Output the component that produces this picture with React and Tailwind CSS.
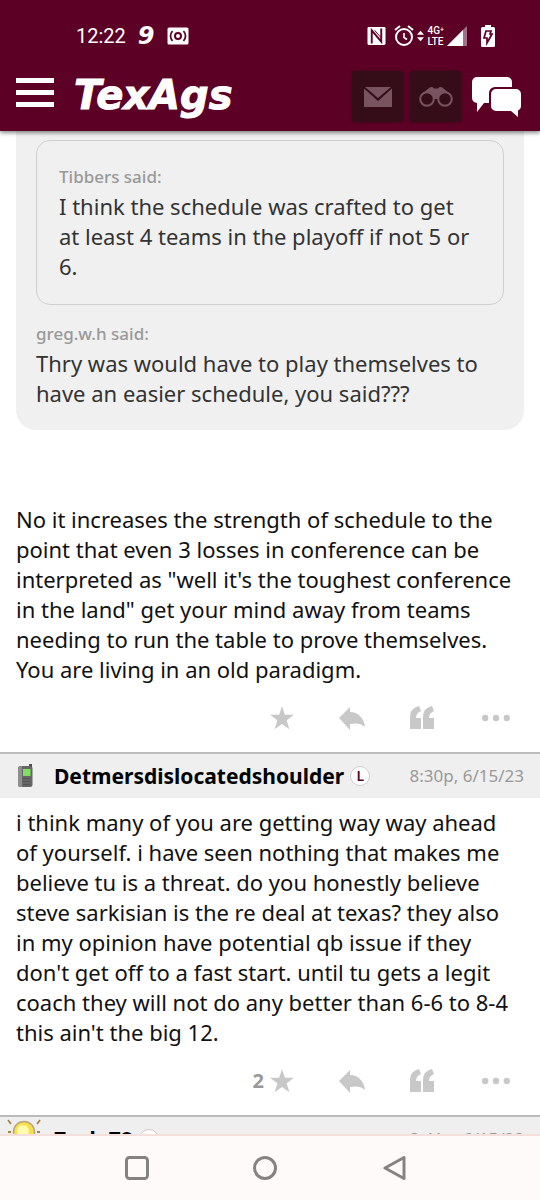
import React from 'react';

const StatusBar = () => (
  <div className="flex h-[58px] items-end justify-between pr-[45px] pl-[76px] pb-2 font-[Roboto,sans-serif] text-white">
    <div className="flex items-center gap-3">
      <span className="text-[20px] leading-7">12:22</span>
      <span className="font-['DejaVu_Sans',sans-serif] text-[24px] leading-7 font-bold italic">9</span>
      <svg className="h-[18px] w-[22px]" viewBox="0 0 22 18" fill="none">
        <rect x="0.5" y="0.5" width="21" height="17" rx="1.5" fill="#fff" />
        <circle cx="11" cy="9" r="3" stroke="#5c0025" strokeWidth="2" />
        <path d="M5.5 4Q1.500 9 5.500 14M16.500 4Q20.500 9 16.500 14" stroke="#5c0025" strokeWidth="1.700" />
      </svg>
    </div>
    <div className="flex h-7 items-center">
      <svg className="h-5 w-[19px]" viewBox="0 0 20 20" fill="none">
        <rect x="0.5" y="0.5" width="19" height="19" rx="1.5" fill="#fff" />
        <path d="M5 18V4l10 12V2" stroke="#5c0025" strokeWidth="2" />
        <path d="M8 4l7 8" stroke="#5c0025" strokeWidth="1" />
      </svg>
      <svg className="ml-2 h-[22px] w-5" viewBox="0 0 20 22" fill="none" stroke="#fff">
        <circle cx="10" cy="12" r="8" strokeWidth="2" />
        <path d="M1 5l5-4M19 5l-5-4" strokeWidth="2" />
        <path d="M10 8v4.500l3 2" strokeWidth="1.600" />
      </svg>
      <svg className="ml-[3px] h-3 w-[7px]" viewBox="0 0 8 12" fill="#fff">
        <path d="M4 0l4 4.500H0zM4 12l4-4.500H0z" />
      </svg>
      <span className="ml-[3px] text-[10px] leading-[11px] font-medium">4G⁺<br />LTE</span>
      <svg className="ml-[3px] h-5 w-5" viewBox="0 0 20 20">
        <path d="M20 0v20H0z" fill="#a3708a" />
        <path d="M16 4v16H0z" fill="#fff" />
      </svg>
      <svg className="ml-3.5 h-[22px] w-3.5" viewBox="0 0 14 22">
        <path d="M4 0h6v2h2.500A1.500 1.500 0 0 1 14 3.500v17a1.500 1.500 0 0 1-1.500 1.500h-11A1.500 1.500 0 0 1 0 20.500v-17A1.500 1.500 0 0 1 1.500 2H4z" fill="#fff" />
        <path d="M5 6h5l-1 3h2l-5 9v-5H3z" fill="none" stroke="#5c0025" strokeWidth="1.700" />
      </svg>
    </div>
  </div>
);

const NavBar = () => (
  <nav className="flex h-[73px] items-center pr-[18px] pl-4">
    <button aria-label="Menu" className="flex w-[38px] flex-col gap-[7px] pb-1">
      <span className="h-[5px] w-full bg-white" />
      <span className="h-[5px] w-full bg-white" />
      <span className="h-[5px] w-full bg-white" />
    </button>
    <a href="#home" className="ml-5 font-['DejaVu_Sans',sans-serif] text-[40px] leading-10 font-bold text-white italic [-webkit-text-stroke:1px_white]">TexAgs</a>
    <div className="ml-auto flex items-center gap-[7px] pt-1">
      <button aria-label="Messages" className="flex h-[51px] w-[51px] items-center justify-center rounded-[3px] bg-[#350d18] shadow-[0_0_3px_#350d18]">
        <svg className="h-5 w-7" viewBox="0 0 28 20">
          <path d="M1 0h26L14 11zM0 1.500L14 14 28 1.500V20H0z" fill="#775460" />
        </svg>
      </button>
      <button aria-label="Watched" className="flex h-[51px] w-[51px] items-center justify-center rounded-[3px] bg-[#350d18] shadow-[0_0_3px_#350d18]">
        <svg className="h-5 w-[34px]" viewBox="0 0 34 20">
          <path d="M3 7L10 1q3-2 5 .5h4q2-2.500 5-.5l7 6-6 6-5-1h-6l-5 1z" fill="#775460" />
          <circle cx="8" cy="12" r="6.800" fill="#350d18" stroke="#775460" strokeWidth="2" />
          <circle cx="26" cy="12" r="6.800" fill="#350d18" stroke="#775460" strokeWidth="2" />
        </svg>
      </button>
      <button aria-label="Chat" className="ml-1">
        <svg className="h-10 w-[50px]" viewBox="0 0 50 40" fill="#fff">
          <path d="M5 0h30a5 5 0 0 1 5 5v5H23a6 6 0 0 0-6 6v10h-5l-7 9V26a5 5 0 0 1-5-5V5a5 5 0 0 1 5-5z" />
          <path d="M24 12h20a5 5 0 0 1 5 5v12a5 5 0 0 1-3 4.500V40l-7-6H24a5 5 0 0 1-5-5V17a5 5 0 0 1 5-5z" />
        </svg>
      </button>
    </div>
  </nav>
);

const PostActions = ({ stars }) => (
  <div className="flex shrink-0 items-center justify-end pt-[22px] pr-[30px] pb-[22px] text-[#c8c8c8]">
    <button aria-label="Star" className="flex items-center gap-[6px]">
      {stars && <span className="text-[20px] leading-6 font-bold text-[#999999]">{stars}</span>}
      <svg className="h-6 w-6" viewBox="0 0 24 24" fill="currentColor">
        <path d="M12 0l2.900 8.800H24l-7.400 5.500 2.800 9L12 18l-7.400 5.300 2.800-9L0 8.800h9.100z" />
      </svg>
    </button>
    <button aria-label="Reply" className="ml-[45px]">
      <svg className="h-6 w-[26px]" viewBox="0 0 26 24" fill="currentColor">
        <path d="M0 12L11 1v5c8 0 14 6 15 15-4-4-9-4-15-3v6z" />
      </svg>
    </button>
    <button aria-label="Quote" className="ml-[45px]">
      <svg className="h-6 w-6" viewBox="0 0 24 24" fill="currentColor">
        <path d="M0 23V11Q0 2 9 0l2 5Q6 7 6 12h5v11zM13 23V11q0-9 9-11l2 5Q19 7 19 12h5v11z" />
      </svg>
    </button>
    <button aria-label="More" className="ml-12">
      <svg className="h-6 w-7" viewBox="0 0 28 24" fill="currentColor">
        <circle cx="3.2" cy="12" r="3.200" />
        <circle cx="14" cy="12" r="3.200" />
        <circle cx="24.8" cy="12" r="3.200" />
      </svg>
    </button>
  </div>
);

const PhoneIcon = () => (
  <svg className="h-6 w-4" viewBox="0 0 16 24">
    <path d="M11 0h3v4H11z" fill="#4d4d4d" />
    <rect x="0" y="2" width="14.500" height="21" rx="2.500" fill="#666" />
    <path d="M0 5v15q0 3 3 3h1V2H3Q0 2 0 5z" fill="#8f8f8f" />
    <rect x="5" y="5" width="7.500" height="7" fill="#7ee060" />
    <path d="M5 14.500h7M5 17.500h7M5 20.500h7" stroke="#555" strokeWidth="1" />
  </svg>
);

const SunIcon = () => (
  <svg className="h-10 w-10" viewBox="0 0 40 40">
    <path d="M2 1l3 4M34 1l-3 4M2 13h3M31 13h3M2 25l3-3M34 25l-3-3" stroke="#a08448" strokeWidth="1.800" />
    <circle cx="18" cy="13" r="10.500" fill="#f7e04a" stroke="#b9a582" strokeWidth="1.500" />
    <circle cx="17" cy="12" r="6" fill="#fffbb0" />
  </svg>
);

const PostHeader = ({ icon, name, time }) => (
  <div className="flex h-[46px] shrink-0 items-center border-t-2 border-[#bbbbbb] bg-[#efefef] pr-4 pl-1">
    <span className="flex w-[50px] shrink-0 justify-center pr-1.5">{icon}</span>
    <a href="#user" className="text-[21px] leading-7 font-bold text-black">{name}</a>
    <span className="ml-1.5 flex h-5 w-5 items-center justify-center rounded-full border border-[#cccccc] bg-white text-[14px] font-semibold text-[#4c0a1e]">L</span>
    <span className="ml-auto text-[17px] text-[#999999]">{time}</span>
  </div>
);

const SystemNav = () => (
  <div className="grid h-[66px] shrink-0 grid-cols-[1fr_104px_24px_106px_1fr] items-center border-t-2 border-[#f5dfdd] bg-[#fffafa] pr-2">
    <button aria-label="Recent apps" className="col-start-1 justify-self-end">
      <svg className="h-6 w-6" viewBox="0 0 24 24" fill="none" stroke="#858282" strokeWidth="3">
        <rect x="1.500" y="1.500" width="21" height="21" rx="3" />
      </svg>
    </button>
    <button aria-label="Home" className="col-start-3">
      <svg className="h-6 w-6" viewBox="0 0 24 24" fill="none" stroke="#858282" strokeWidth="3">
        <circle cx="12" cy="12" r="10.500" />
      </svg>
    </button>
    <button aria-label="Back" className="col-start-5 justify-self-start">
      <svg className="h-6 w-6" viewBox="0 0 24 24" fill="none" stroke="#858282" strokeWidth="3" strokeLinejoin="round">
        <path d="M21 1.500v21L2 12z" />
      </svg>
    </button>
  </div>
);

const App = () => {
  return (
    <div className="flex h-screen flex-col overflow-hidden bg-white font-['Noto_Sans',sans-serif]">
      <header className="z-10 shrink-0 bg-[#5c0025] shadow-[0_2px_4px_rgba(0,0,0,0.45)]">
        <StatusBar />
        <NavBar />
      </header>

      <main className="flex min-h-0 flex-1 flex-col overflow-hidden text-[22px] leading-[30px] text-[#111111]">
        <section className="shrink-0 px-4">
          <blockquote className="rounded-b-[20px] bg-[#f0f0f0] px-5 pt-[9px] pb-[22px] text-[#333333]">
            <blockquote className="rounded-[14px] border border-[#cfcfcf] px-[22px] pt-6 pb-[23px]">
              <p className="text-[17px] leading-6 font-medium text-[#999999]">Tibbers said:</p>
              <p className="pt-0.5">
                I think the schedule was crafted to get<br />
                at least 4 teams in the playoff if not 5 or<br />
                6.
              </p>
            </blockquote>
            <p className="pt-[17px] text-[17px] leading-6 font-medium text-[#999999]">greg.w.h said:</p>
            <p className="pt-0.5">Thry was would have to play themselves to have an easier schedule, you said???</p>
          </blockquote>
          <p className="pt-[74px]">
            No it increases the strength of schedule to the<br />
            point that even 3 losses in conference can be<br />
            interpreted as "well it's the toughest conference<br />
            in the land" get your mind away from teams<br />
            needing to run the table to prove themselves.<br />
            You are living in an old paradigm.
          </p>
        </section>
        <PostActions />

        <PostHeader icon={<PhoneIcon />} name="Detmersdislocatedshoulder" time="8:30p, 6/15/23" />
        <p className="shrink-0 px-4 pt-[9px]">
          i think many of you are getting way way ahead<br />
          of yourself. i have seen nothing that makes me<br />
          believe tu is a threat. do you honestly believe<br />
          steve sarkisian is the re deal at texas? they also<br />
          in my opinion have potential qb issue if they<br />
          don't get off to a fast start. until tu gets a legit<br />
          coach they will not do any better than 6-6 to 8-4<br />
          this ain't the big 12.
        </p>
        <PostActions stars={2} />

        <PostHeader icon={<SunIcon />} name="Zach 78" time="8:41p, 6/15/23" />
      </main>

      <SystemNav />
    </div>
  );
};

export default App;
